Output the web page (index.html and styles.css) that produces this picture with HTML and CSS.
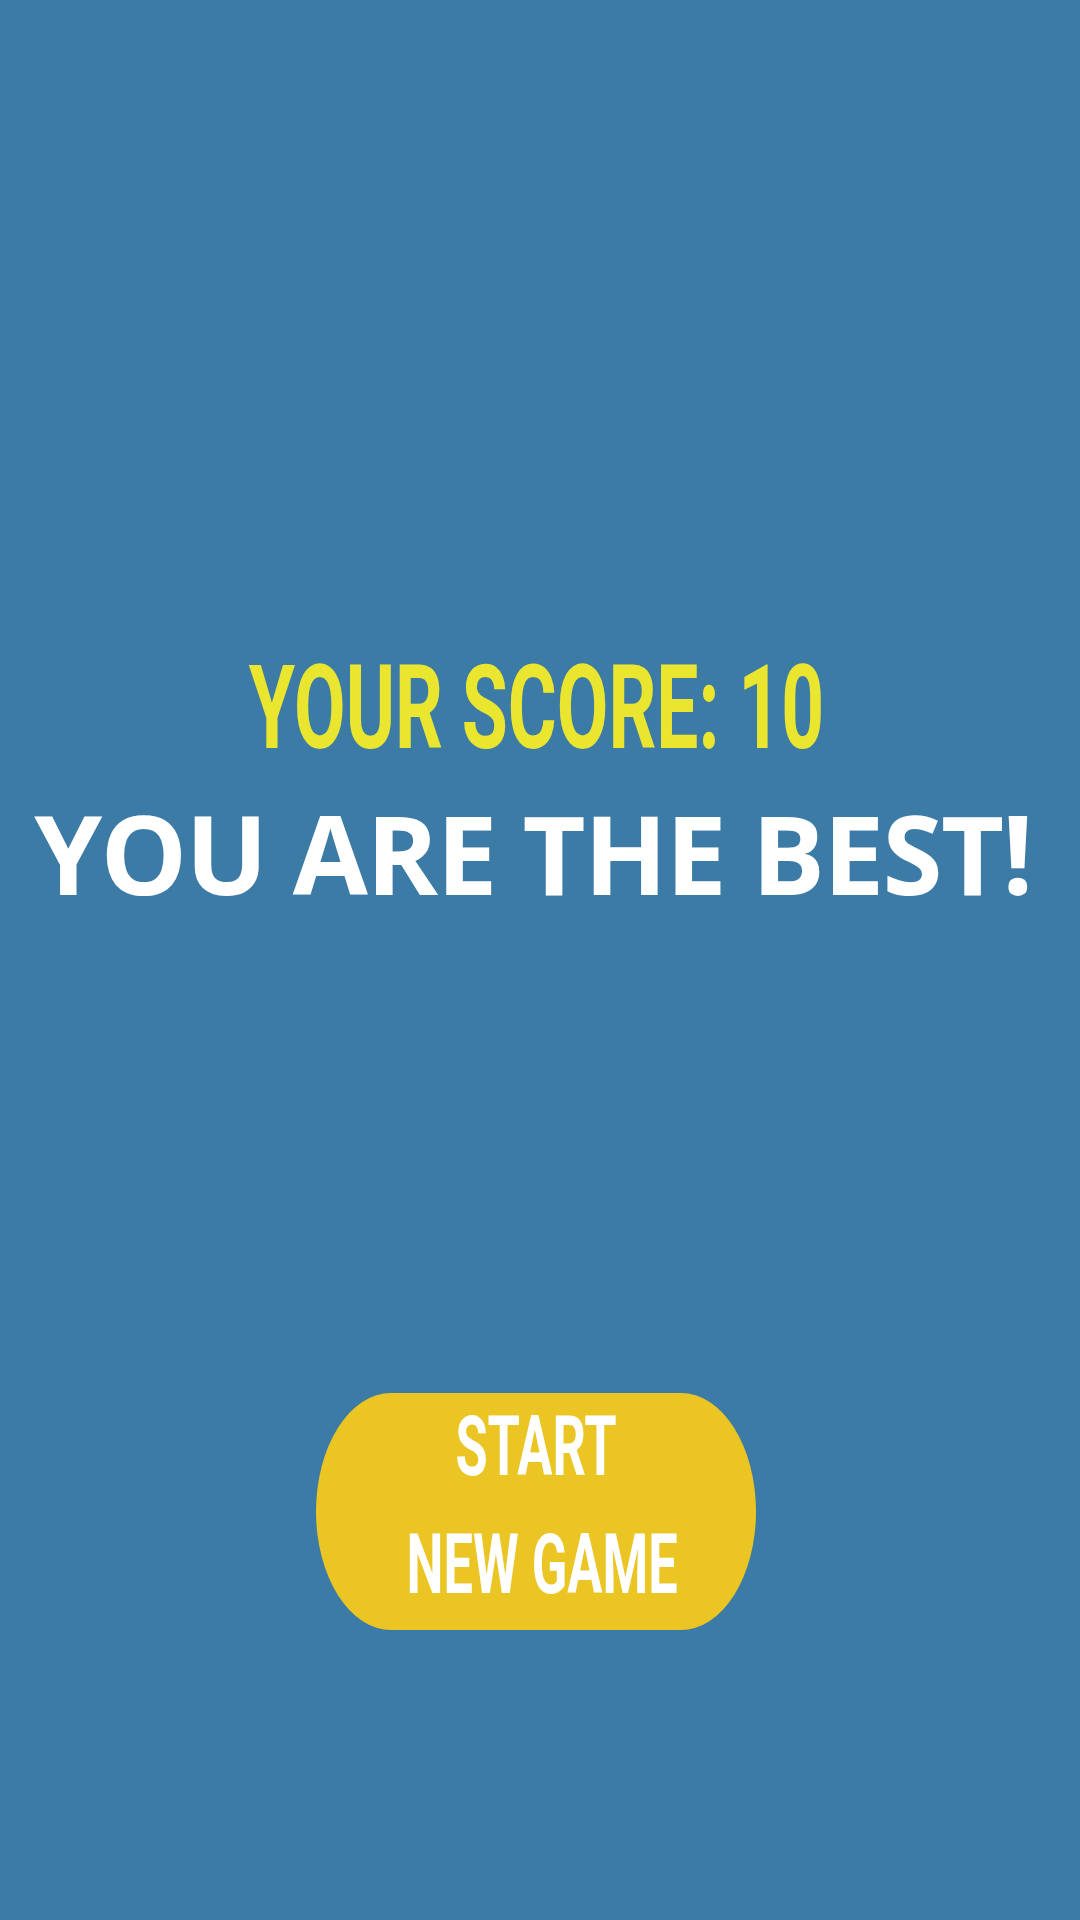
FILE: index.html
```html
<!DOCTYPE html>
<html lang="en">
<head>
<meta charset="utf-8">
<title>Game Over</title>
<link rel="stylesheet" href="styles.css">
</head>
<body>
<main class="screen">
  <h1 class="score"><span class="condensed score-text">Your Score: 10</span></h1>
  <p class="message">YOU ARE THE BEST!</p>
  <button class="restart" type="button">
    <span class="condensed btn-line">Start</span>
    <span class="condensed btn-line btn-line-second">New Game</span>
  </button>
</main>
</body>
</html>
```
FILE: styles.css
```css
html, body {
  margin: 0;
  padding: 0;
  background: #3b7ba6;
}
.screen {
  width: 1080px;
  height: 1920px;
  display: flex;
  flex-direction: column;
  align-items: center;
  padding: 650px 8px 0 0;
  box-sizing: border-box;
  overflow: hidden;
}
.condensed {
  display: inline-block;
  font-family: Roboto, "Liberation Sans", sans-serif;
  font-weight: 700;
  text-transform: uppercase;
  white-space: nowrap;
  transform-origin: center;
}
.score {
  margin: 0;
  font-size: 117px;
  line-height: 117px;
  font-weight: 700;
  color: #eae52f;
  text-align: center;
}
.score-text {
  transform: scaleX(0.64);
}
.message {
  margin: 31px 6px 0 0;
  font-family: "Open Sans", sans-serif;
  font-weight: 700;
  font-size: 109px;
  line-height: 109px;
  letter-spacing: -1.7px;
  color: #ffffff;
  text-align: center;
  white-space: nowrap;
}
.restart {
  margin-top: 486px;
  width: 440px;
  height: 237px;
  border: none;
  border-radius: 75px / 50%;
  background: #eac524;
  color: #ffffff;
  display: flex;
  flex-direction: column;
  align-items: center;
  justify-content: center;
  padding: 0 0 12px;
  box-sizing: border-box;
  overflow: visible;
}
.btn-line {
  font-size: 83px;
  line-height: 118px;
  transform: scaleX(0.63);
}
.btn-line-second {
  margin-left: 12px;
}
```
